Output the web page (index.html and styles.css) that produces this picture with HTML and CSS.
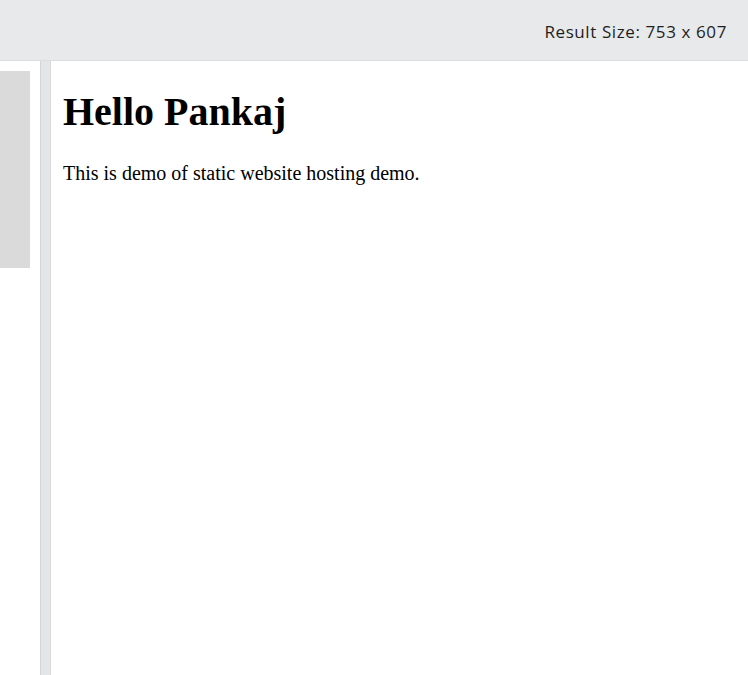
FILE: index.html
```html
<!DOCTYPE html>
<html>
<head>
<meta charset="utf-8">
<link rel="stylesheet" href="styles.css">
</head>
<body>
<div class="topbar"><span class="size">Result Size: 753 x 607</span></div>
<div class="main">
  <div class="left"><div class="block"></div></div>
  <div class="divider"></div>
  <div class="result">
    <h1 class="title">Hello Pankaj</h1>
    <p class="text">This is demo of static website hosting demo.</p>
  </div>
</div>
</body>
</html>
```
FILE: styles.css
```css
html, body { margin: 0; padding: 0; background: #fff; }
body { width: 748px; height: 675px; overflow: hidden; }
.topbar {
  height: 60px;
  background: #e8e9eb;
  border-bottom: 1px solid #dcdde0;
  display: flex;
  align-items: center;
  justify-content: flex-end;
  padding-right: 21px;
  box-sizing: content-box;
}
.size {
  font-family: "Open Sans", "DejaVu Sans", sans-serif;
  font-size: 17px;
  letter-spacing: 0.6px;
  color: #1e1e1e;
  padding-top: 3px;
}
.main { display: flex; height: 614px; }
.left { width: 40px; padding-top: 10px; box-sizing: border-box; }
.block { width: 30px; height: 197px; background: #dadada; }
.divider {
  width: 11px;
  background: #e4e5e7;
  border-left: 1px solid #d4d5d7;
  border-right: 1px solid #d9dadc;
  box-sizing: border-box;
}
.result {
  flex: 1;
  padding: 0 12px;
  font-family: "Liberation Serif", "Times New Roman", serif;
  color: #000;
}
.title { font-size: 40px; font-weight: bold; margin: 27.5px 0 0; line-height: 46px; }
.text { font-size: 20px; margin: 27px 0 0; line-height: 23px; }
```
